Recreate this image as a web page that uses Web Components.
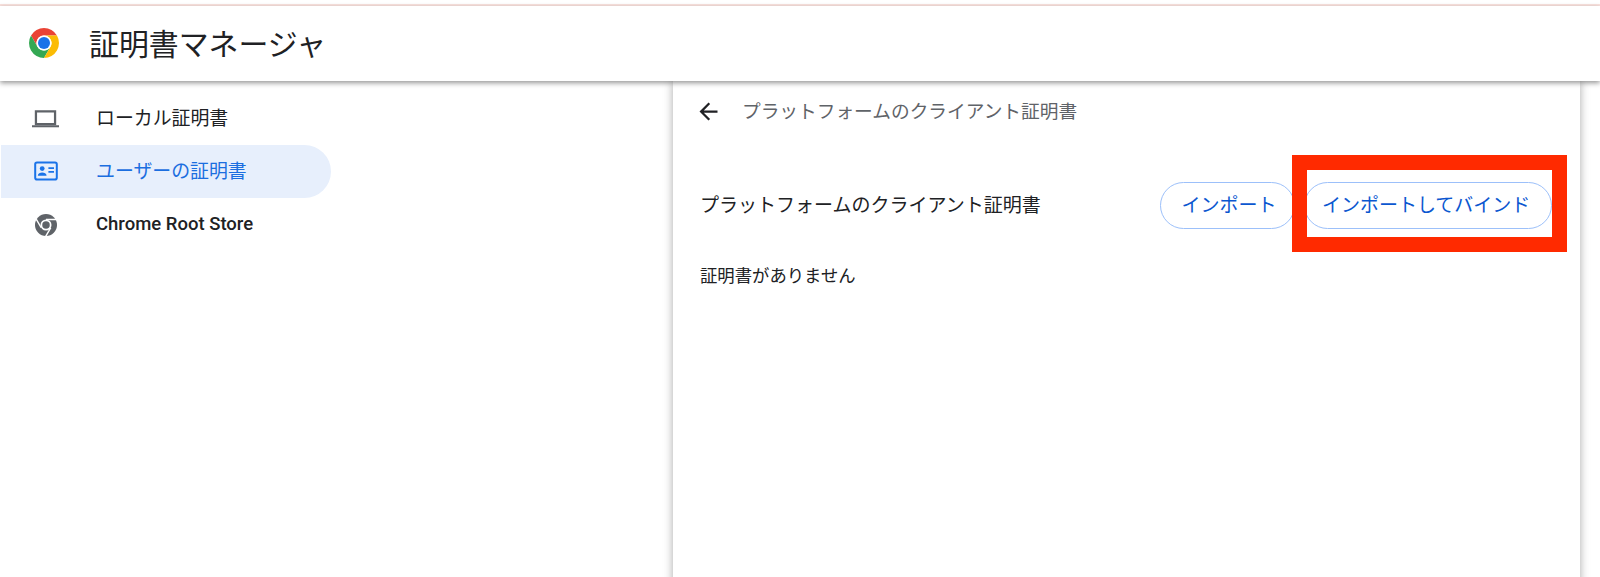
<!DOCTYPE html>
<html lang="ja">
<head>
<meta charset="utf-8">
<title>証明書マネージャ</title>
<style>
  html, body { margin: 0; height: 100%; background: #fff; overflow: hidden; }
  body { font-family: Roboto, "Noto Sans CJK JP", sans-serif; color: #202124; }
</style>
</head>
<body>
<cm-app>
  <cm-header slot="header" title-text="証明書マネージャ"></cm-header>
  <cm-nav slot="nav">
    <cm-nav-item icon="laptop">ローカル証明書</cm-nav-item>
    <cm-nav-item icon="badge" active>ユーザーの証明書</cm-nav-item>
    <cm-nav-item icon="chrome" strong>Chrome Root Store</cm-nav-item>
  </cm-nav>
  <cm-card slot="main" sub-title="プラットフォームのクライアント証明書">
    <cm-section heading="プラットフォームのクライアント証明書">
      <cm-button slot="actions" style="--pl:20.7px;--pr:17.7px">インポート</cm-button>
      <cm-button slot="actions" style="--pl:16.7px;--pr:20.7px">インポートしてバインド</cm-button>
      証明書がありません
    </cm-section>
  </cm-card>
</cm-app>
<red-mark></red-mark>

<script>
const FONT = 'Roboto, "Noto Sans CJK JP", sans-serif';

class CmApp extends HTMLElement {
  constructor() {
    super();
    this.attachShadow({ mode: 'open' });
    this.shadowRoot.innerHTML = `
      <style>
        :host { display: block; height: 577px; overflow: hidden; font-family: ${FONT}; }
        .band { height: 4px; border-bottom: 2px solid #fbe3df; }
        .body { display: grid; grid-template-columns: 673px 907px; height: 496px; }
      </style>
      <div class="band"></div>
      <slot name="header"></slot>
      <div class="body">
        <slot name="nav"></slot>
        <slot name="main"></slot>
      </div>`;
  }
}

class CmHeader extends HTMLElement {
  constructor() {
    super();
    this.attachShadow({ mode: 'open' });
    this.shadowRoot.innerHTML = `
      <style>
        :host { display: flex; align-items: center; position: relative; z-index: 2; height: 75px; padding-left: 26px;
          background: #fff; box-shadow: 0 2px 5px rgba(0,0,0,.42); }
        svg { width: 36px; height: 36px; flex: none; margin-top: -1px; }
        h1 { margin: 0 0 3px 27px; font-size: 29.9px; font-weight: 400; color: #202124; }
      </style>
      <svg viewBox="0 0 48 48">
        <path fill="#ea4335" d="M24 14H41.3A20 20 0 0 0 6.7 14L15.3 29A10 10 0 0 1 24 14Z"/>
        <path fill="#34a853" d="M6.7 14A20 20 0 0 0 24 44L32.7 29A10 10 0 0 1 15.3 29Z"/>
        <path fill="#fbbc04" d="M41.3 14A20 20 0 0 1 24 44L32.7 29A10 10 0 0 0 24 14Z"/>
        <circle cx="24" cy="24" r="10" fill="#fff"/>
        <circle cx="24" cy="24" r="8" fill="#1a73e8"/>
      </svg>
      <h1></h1>`;
    this.shadowRoot.querySelector('h1').textContent = this.getAttribute('title-text');
  }
}

class CmNav extends HTMLElement {
  constructor() {
    super();
    this.attachShadow({ mode: 'open' });
    this.shadowRoot.innerHTML = `
      <style>
        :host { display: block; padding-top: 11px; }
      </style>
      <slot></slot>`;
  }
}

const ICONS = {
  laptop: `<path fill="none" stroke="currentColor" stroke-width="2" d="M3.5 5.6h17v11.4h-17z"/><path fill="currentColor" d="M0 18h24v1.8H0z"/>`,
  badge: `<rect x="1.2" y="3.4" width="21.6" height="17.2" rx="1.8" fill="none" stroke="currentColor" stroke-width="2"/>
    <circle cx="8.2" cy="9.6" r="2.4" fill="currentColor"/><path fill="currentColor" d="M3.8 16.8c0-2.4 2.4-3.4 4.4-3.4s4.4 1 4.4 3.4z"/>
    <path fill="currentColor" d="M14.4 8.2h5.6v1.8h-5.6zM14.4 12h5.6v1.8h-5.6z"/>`,
  chrome: `<circle cx="12" cy="12" r="12" fill="currentColor"/><circle cx="12" cy="12" r="6" fill="#fff"/><circle cx="12" cy="12" r="4.1" fill="currentColor"/>
    <path fill="none" stroke="#fff" stroke-width="1.6" d="M12 6H23M6.8 15L1.3 5.5M17.2 15L11.6 24.5"/>`
};

class CmNavItem extends HTMLElement {
  constructor() {
    super();
    this.attachShadow({ mode: 'open' });
    this.shadowRoot.innerHTML = `
      <style>
        :host { display: flex; align-items: center; height: 53px; width: 330px; margin-left: 1px; padding-left: 31px; box-sizing: border-box;
          border-radius: 0 27px 27px 0; font-size: 18.9px; color: #202124; }
        :host([active]) { background: #e7effc; color: #1b6ee0; }
        :host([strong]) { font-size: 18.5px; font-weight: 500; }
        span { padding-bottom: 5px; }
        :host([strong]) span { padding-bottom: 2px; }
        .icon { width: 27px; height: 27px; flex: none; margin-right: 37px; color: #5f6368; }
        :host([active]) .icon { width: 24px; height: 24px; margin: -2px 38.5px 0 1.5px; color: #1a73e8; }
        :host([strong]) .icon { width: 22px; height: 22px; margin: 0 39px 0 3px; }
      </style>
      <svg class="icon" viewBox="0 0 24 24">${ICONS[this.getAttribute('icon')]}</svg>
      <span><slot></slot></span>`;
  }
}

class CmCard extends HTMLElement {
  constructor() {
    super();
    this.attachShadow({ mode: 'open' });
    this.shadowRoot.innerHTML = `
      <style>
        :host { display: block; background: #fff; box-shadow: 0 0 9px rgba(0,0,0,.34); height: 600px; position: relative; z-index: 1; }
        .sub { display: flex; align-items: center; height: 60px; padding-left: 22px; color: #5f6368; font-size: 18.7px; }
        svg { width: 27px; height: 27px; flex: none; margin-right: 20px; color: #202124; }
        span { padding-bottom: 4px; }
      </style>
      <div class="sub">
        <svg viewBox="0 0 24 24"><path fill="currentColor" d="M20 11H7.83l5.59-5.59L12 4l-8 8 8 8 1.41-1.41L7.83 13H20z"/></svg>
        <span id="t"></span>
      </div>
      <slot></slot>`;
    this.shadowRoot.querySelector('#t').textContent = this.getAttribute('sub-title');
  }
}

class CmSection extends HTMLElement {
  constructor() {
    super();
    this.attachShadow({ mode: 'open' });
    this.shadowRoot.innerHTML = `
      <style>
        :host { display: block; padding: 41px 28px 0 27px; font-size: 19px; color: #202124; }
        .row { display: flex; align-items: center; justify-content: space-between; height: 47px; }
        #h { padding-bottom: 4px; }
        .actions { display: flex; gap: 9px; }
        .empty { margin-top: 34px; font-size: 17.35px; line-height: 26px; }
      </style>
      <div class="row">
        <span id="h"></span>
        <div class="actions"><slot name="actions"></slot></div>
      </div>
      <div class="empty"><slot></slot></div>`;
    this.shadowRoot.querySelector('#h').textContent = this.getAttribute('heading');
  }
}

class CmButton extends HTMLElement {
  constructor() {
    super();
    this.attachShadow({ mode: 'open' });
    this.shadowRoot.innerHTML = `
      <style>
        :host { display: inline-flex; align-items: center; justify-content: center; box-sizing: border-box; height: 47px;
          padding: 0 var(--pr, 18.7px) 4px var(--pl, 18.7px);
          border: 1px solid #9cc0fa; border-radius: 24px; background: #fff; color: #0b57d0; font-size: 19px; white-space: nowrap; }
      </style>
      <slot></slot>`;
  }
}

// annotation drawn on top of the screenshot
class RedMark extends HTMLElement {
  constructor() {
    super();
    this.attachShadow({ mode: 'open' });
    this.shadowRoot.innerHTML = `
      <style>
        :host { display: block; position: absolute; z-index: 5; left: 1291.5px; top: 155px; width: 245.5px; height: 67px;
          border: 15px solid #ff2a00; pointer-events: none; }
      </style>`;
  }
}

customElements.define('cm-app', CmApp);
customElements.define('cm-header', CmHeader);
customElements.define('cm-nav', CmNav);
customElements.define('cm-nav-item', CmNavItem);
customElements.define('cm-card', CmCard);
customElements.define('cm-section', CmSection);
customElements.define('cm-button', CmButton);
customElements.define('red-mark', RedMark);
</script>
</body>
</html>
